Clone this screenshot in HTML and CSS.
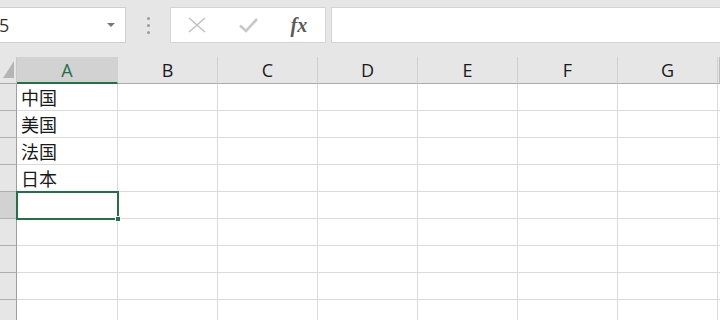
FILE: index.html
```html
<!doctype html>
<html>
    <head>
        <meta charset="utf-8">
        <title>工作表</title>
        <link rel="stylesheet" href="styles.css">
    </head>
    <body>
        <div class="toolbar">
            <div class="namebox">
                <span class="ref">5</span>
                <span class="caret"></span>
            </div>
            <div class="grip"><i></i><i></i><i></i></div>
            <div class="fbtns">
                <span class="fb cancel">
                    <svg width="18" height="16" viewBox="0 0 18 16"><path d="M1 1L17 15M17 1L1 15" stroke="#c2c2c2" stroke-width="1.6" fill="none"/></svg>
                </span>
                <span class="fb enter">
                    <svg width="19" height="16" viewBox="0 0 19 16"><path d="M1 8.5L7 14L18 2" stroke="#c8c8c8" stroke-width="2.6" fill="none"/></svg>
                </span>
                <span class="fb fx">fx</span>
            </div>
            <div class="finput"></div>
        </div>

        <div class="sheet">
            <div class="corner">
                <svg width="12" height="20" viewBox="0 0 12 20"><polygon points="12,2 12,19 1,19" fill="#b5b5b5"/></svg>
            </div>
            <div class="ch active">A</div>
            <div class="ch">B</div>
            <div class="ch">C</div>
            <div class="ch">D</div>
            <div class="ch">E</div>
            <div class="ch">F</div>
            <div class="ch">G</div>
            <div class="ch end"></div>

            <div class="rh"></div><div class="c">中国</div><div class="c"></div><div class="c"></div><div class="c"></div><div class="c"></div><div class="c"></div><div class="c"></div><div class="c end"></div>
            <div class="rh"></div><div class="c">美国</div><div class="c"></div><div class="c"></div><div class="c"></div><div class="c"></div><div class="c"></div><div class="c"></div><div class="c end"></div>
            <div class="rh"></div><div class="c">法国</div><div class="c"></div><div class="c"></div><div class="c"></div><div class="c"></div><div class="c"></div><div class="c"></div><div class="c end"></div>
            <div class="rh"></div><div class="c">日本</div><div class="c"></div><div class="c"></div><div class="c"></div><div class="c"></div><div class="c"></div><div class="c"></div><div class="c end"></div>
            <div class="rh active"></div><div class="c sel"><span class="handle"></span></div><div class="c"></div><div class="c"></div><div class="c"></div><div class="c"></div><div class="c"></div><div class="c"></div><div class="c end"></div>
            <div class="rh"></div><div class="c"></div><div class="c"></div><div class="c"></div><div class="c"></div><div class="c"></div><div class="c"></div><div class="c"></div><div class="c end"></div>
            <div class="rh"></div><div class="c"></div><div class="c"></div><div class="c"></div><div class="c"></div><div class="c"></div><div class="c"></div><div class="c"></div><div class="c end"></div>
            <div class="rh"></div><div class="c"></div><div class="c"></div><div class="c"></div><div class="c"></div><div class="c"></div><div class="c"></div><div class="c"></div><div class="c end"></div>
            <div class="rh"></div><div class="c"></div><div class="c"></div><div class="c"></div><div class="c"></div><div class="c"></div><div class="c"></div><div class="c"></div><div class="c end"></div>
        </div>
    </body>
</html>
```

FILE: styles.css
```css
*{margin:0;padding:0;box-sizing:border-box;}
html,body{width:720px;height:320px;overflow:hidden;}
body{
    background:#e6e6e6;
    font-family:"Open Sans","Noto Sans CJK SC",sans-serif;
    color:#222;
}

/* formula bar */
.toolbar{
    display:flex;
    align-items:stretch;
    height:43px;
    padding-top:7px;
}
.namebox{
    width:126px;
    background:#fff;
    border:1px solid #cfcfcf;
    border-left:0;
    display:flex;
    align-items:center;
    justify-content:space-between;
    padding-right:10px;
}
.ref{
    font-size:18px;
    margin-left:-1px;
    color:#333;
}
.caret{
    width:0;height:0;
    border-left:4px solid transparent;
    border-right:4px solid transparent;
    border-top:4px solid #777;
}
.grip{
    width:44px;
    display:flex;
    flex-direction:column;
    align-items:center;
    justify-content:center;
    gap:4px;
}
.grip i{
    display:block;
    width:3px;height:3px;
    border-radius:50%;
    background:#9c9c9c;
}
.fbtns{
    width:156px;
    background:#fff;
    border:1px solid #d4d4d4;
    display:flex;
    align-items:center;
    padding-left:17px;
}
.fb{
    width:52px;
    display:flex;
    align-items:center;
}
.enter{padding-left:6px;}
.fx{
    font-family:"Liberation Serif",serif;
    font-style:italic;
    font-weight:bold;
    font-size:20px;
    color:#5a5a5a;
    padding-left:12px;
}
.finput{
    flex:1;
    margin-left:5px;
    background:#fff;
    border:1px solid #d4d4d4;
    border-right:0;
}

/* grid */
.sheet{
    margin-top:14px;
    display:grid;
    grid-template-columns:17px 101px repeat(6,100px) 2px;
    grid-template-rows:27px repeat(8,27px) 27px;
}
.corner{
    background:#e6e6e6;
    border-right:1px solid #c8c8c8;
    border-bottom:1px solid #ababab;
    display:flex;
    align-items:flex-start;
    padding:2px 0 0 2px;
}
.ch{
    background:#e6e6e6;
    border-right:1px solid #cfcfcf;
    border-bottom:1px solid #ababab;
    text-align:center;
    font-size:18px;
    line-height:26px;
    color:#1a1a1a;
}
.ch.active{
    background:#d2d2d2;
    color:#217346;
    border-bottom:2px solid #217346;
}
.ch.end{border-right:1px solid #bdbdbd;}
.rh{
    background:#e6e6e6;
    border-right:1px solid #9e9e9e;
    border-bottom:1px solid #b0b0b0;
}
.rh.active{background:#d2d2d2;}
.c{
    background:#fff;
    border-right:1px solid #dadada;
    border-bottom:1px solid #dadada;
    font-family:"Noto Sans CJK SC",sans-serif;
    font-size:18px;
    line-height:26px;
    padding-left:4px;
    color:#1a1a1a;
    position:relative;
}
.c.end{background:#fff;border-right:0;padding:0;}
.c.sel{
    border:2px solid #217346;
    margin:-1px 0 0 -1px;
    width:103px;
    height:29px;
    z-index:2;
}
.handle{
    position:absolute;
    right:-4px;
    bottom:-4px;
    width:6px;height:6px;
    background:#217346;
    border:1px solid #fff;
}
```
